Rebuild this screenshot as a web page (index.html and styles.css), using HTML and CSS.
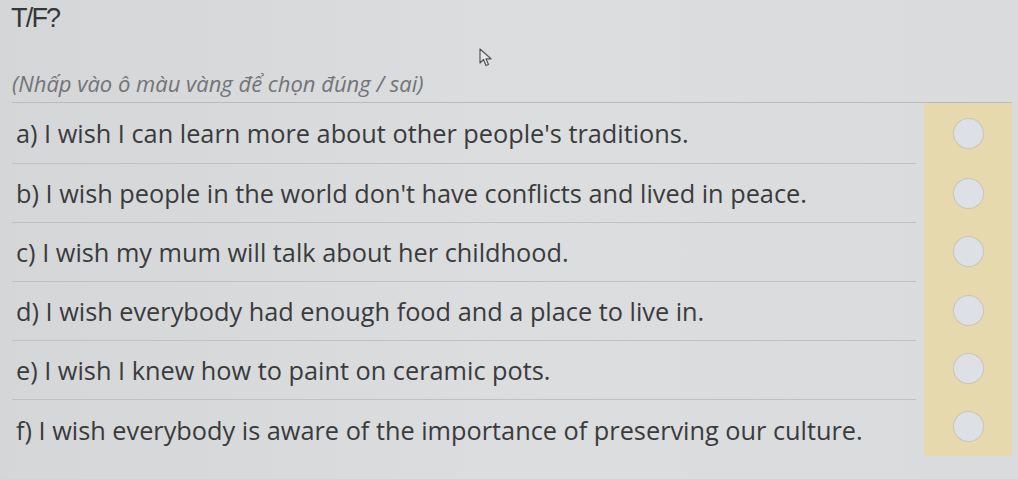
FILE: index.html
```html
<!DOCTYPE html>
<html>
<head>
<meta charset="utf-8">
<link rel="stylesheet" href="styles.css">
</head>
<body>
<div class="page">
  <h1 class="title">T/F?</h1>
  <p class="hint">(Nhấp vào ô màu vàng để chọn đúng / sai)</p>
  <div class="quiz">
    <div class="rows">
      <div class="row">a) I wish I can learn more about other people's traditions.</div>
      <div class="row">b) I wish people in the world don't have conflicts and lived in peace.</div>
      <div class="row">c) I wish my mum will talk about her childhood.</div>
      <div class="row">d) I wish everybody had enough food and a place to live in.</div>
      <div class="row">e) I wish I knew how to paint on ceramic pots.</div>
      <div class="row last">f) I wish everybody is aware of the importance of preserving our culture.</div>
    </div>
    <div class="answers">
      <div class="cell"><span class="dot"></span></div>
      <div class="cell"><span class="dot"></span></div>
      <div class="cell"><span class="dot"></span></div>
      <div class="cell"><span class="dot"></span></div>
      <div class="cell"><span class="dot"></span></div>
      <div class="cell"><span class="dot"></span></div>
    </div>
  </div>
  <svg class="cursor" width="14" height="20" viewBox="0 0 14 20"><path d="M1 1 L1 15 L4.5 11.5 L7 17.5 L9.5 16.5 L7 10.8 L12 10.8 Z" fill="#e4e6e8" stroke="#555" stroke-width="1.2" stroke-linejoin="round"/></svg>
</div>
</body>
</html>
```
FILE: styles.css
```css
html, body {
  margin: 0;
  padding: 0;
}
body {
  background: linear-gradient(90deg, #d4d6d8 0%, #dbdddf 50%, #d9dbdd 100%);
  width: 1018px;
  height: 479px;
  overflow: hidden;
  font-family: "Open Sans", sans-serif;
}
.page {
  position: relative;
  height: 479px;
}
.title {
  margin: 0;
  padding: 2px 0 0 11px;
  font-family: "Liberation Sans", Arial, sans-serif;
  font-weight: normal;
  font-size: 27px;
  letter-spacing: -1.8px;
  line-height: 32px;
  color: #363738;
}
.hint {
  margin: 35px 0 0 12px;
  font-style: italic;
  font-size: 22px;
  line-height: 28px;
  color: #727476;
  font-family: "Open Sans", sans-serif;
}
.quiz {
  display: flex;
  margin: 5px 6px 0 12px;
  border-top: 1px solid #b9bbbd;
}
.rows {
  flex: 1;
}
.row {
  height: 59px;
  box-sizing: border-box;
  border-bottom: 1px solid #bfc1c3;
  display: flex;
  align-items: center;
  padding-left: 4px;
  font-size: 25.3px;
  color: #3a3b3c;
  font-family: "Open Sans", sans-serif;
  margin-right: 8px;
}
.row:first-child {
  height: 61px;
}
.row.last {
  border-bottom: none;
}
.answers {
  width: 88px;
  height: 353px;
  background: #e6d9ad;
  display: flex;
  flex-direction: column;
}
.cell {
  height: 59px;
  display: flex;
  align-items: center;
  justify-content: center;
}
.cell:first-child {
  height: 62px;
}
.dot {
  width: 29px;
  height: 29px;
  border-radius: 50%;
  background: #dde1e5;
  box-shadow: 0 0 0 1px #c9c6b8;
}
.cursor {
  position: absolute;
  left: 479px;
  top: 48px;
}
```
